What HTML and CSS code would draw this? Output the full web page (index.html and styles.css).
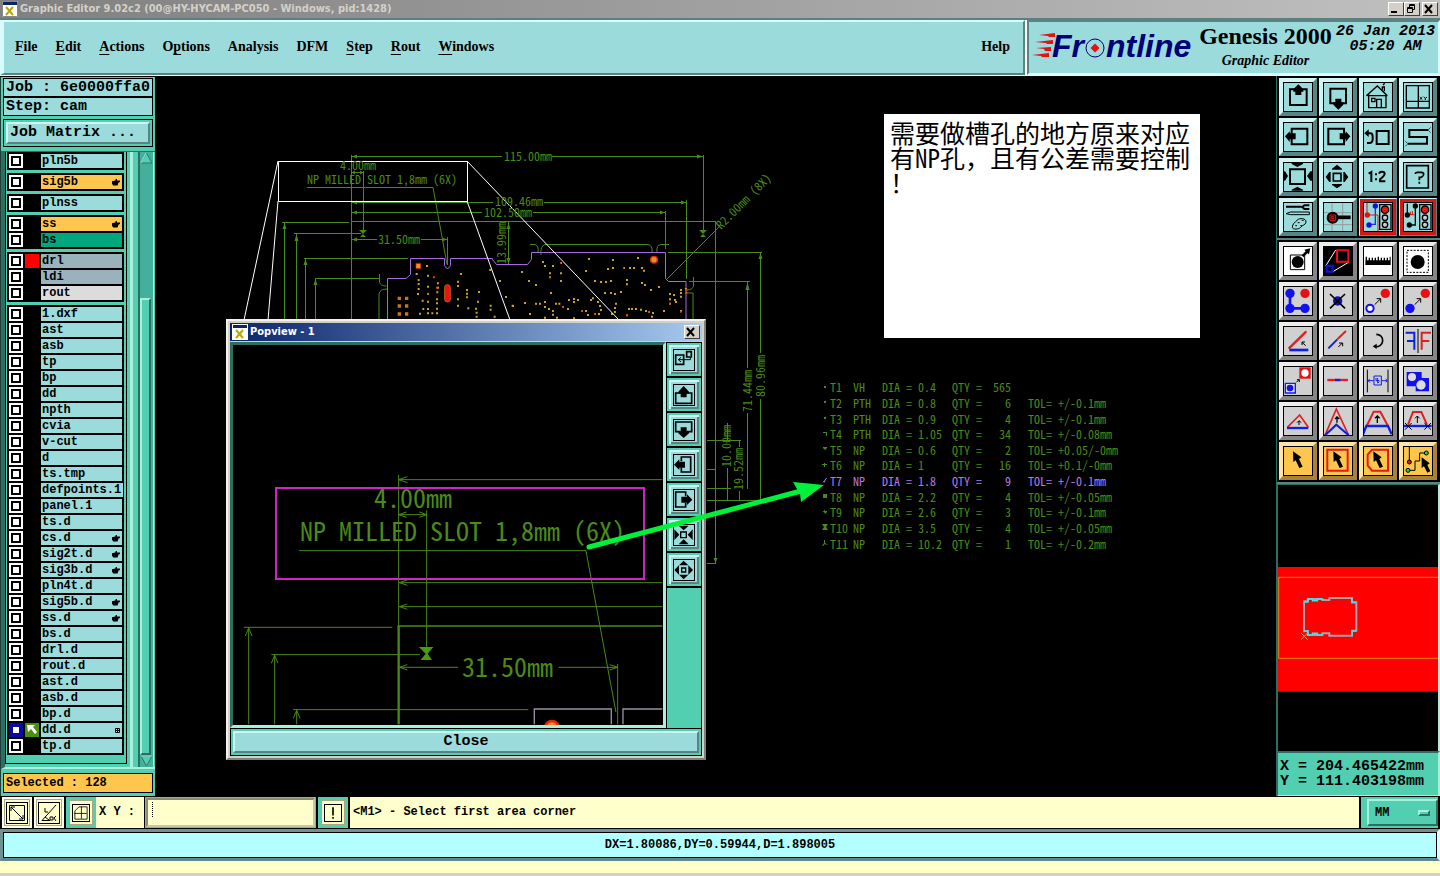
FILE: index.html
```html
<!DOCTYPE html>
<html lang="en">
<head>
<meta charset="utf-8">
<title>Graphic Editor</title>
<link rel="stylesheet" href="styles.css">
</head>
<body>
<header class="titlebar">
  <svg class="app-icon" width="16" height="16" viewBox="0 0 16 16"><path fill="#fff" d="M0 0h16v16H0z"/><path fill="#0a246a" d="M1 1h14v3H1z"/><path stroke="#b8a800" stroke-width="2" d="M4 6l7 8M11 6l-7 8"/><path fill="none" stroke="#888" d="M.5 .5h15v15H.5z"/></svg>
  <h1 class="title-text">Graphic Editor 9.02c2 (00@HY-HYCAM-PC050 - Windows, pid:1428)</h1>
  <div class="window-buttons">
    <button class="win-btn" aria-label="Minimize"><svg width="12" height="10"><path fill="#000" d="M2 7h6v2H2z"/></svg></button>
    <button class="win-btn" aria-label="Restore"><svg width="12" height="10"><path fill="none" stroke="#000" d="M4.500 3V.5h5v5H8M4 1.500h6M2.500 3.500h5v5h-5zM2 4.500h6"/></svg></button>
    <button class="win-btn spaced" aria-label="Close window"><svg width="12" height="10"><path stroke="#000" stroke-width="2" d="M2 1l7 8M9 1L2 9"/></svg></button>
  </div>
</header>

<div class="header">
  <nav class="menu">
    <a href="#"><u>F</u>ile</a><a href="#"><u>E</u>dit</a><a href="#"><u>A</u>ctions</a><a href="#">O<u>p</u>tions</a><a href="#">Analysis</a><a href="#">DFM</a><a href="#"><u>S</u>tep</a><a href="#"><u>R</u>out</a><a href="#"><u>W</u>indows</a>
    <a class="help" href="#">Help</a>
  </nav>
  <div class="brand">
    <svg class="logo" width="164" height="36" viewBox="0 0 164 36" aria-label="Frontline">
      <path fill="#e81010" d="M8 7l16-2v4H18l-1-1zM4 14l18-2v4h-6l-1-1zM5 20l15-1v4h-6l-1-2zM1 27l17-2v4h-7l-1-1z"/>
      <text class="logo-text" x="21" y="29">Fr</text>
      <text class="logo-text" x="75" y="29">ntline</text>
      <circle cx="64" cy="20" r="9" fill="none" stroke="#000078" stroke-width="1"/>
      <path fill="#e81010" d="M64 15.500l4.500 4.500-4.500 4.500-4.500-4.500z"/>
    </svg>
    <div class="product"><strong>Genesis 2000</strong><em>Graphic Editor</em></div>
    <div class="clock"><span>26 Jan 2013</span><span>05:20 AM</span></div>
  </div>
</div>

<main class="workspace">
  <aside class="sidebar">
    <div class="info">Job : 6e0000ffa0</div>
    <div class="info">Step: cam</div>
    <div class="matrix"><button>Job Matrix ...</button></div>
    <div class="layers">
      <div class="layer-list">
        <div class="group"><label class="layer"><input type="checkbox"><i></i><span>pln5b</span></label></div>
        <div class="group"><label class="layer signal"><input type="checkbox"><i></i><span>sig5b<b class="hand"></b></span></label></div>
        <div class="group"><label class="layer"><input type="checkbox"><i></i><span>plnss</span></label></div>
        <div class="group"><label class="layer signal"><input type="checkbox"><i></i><span>ss<b class="hand"></b></span></label><label class="layer mask"><input type="checkbox"><i></i><span>bs</span></label></div>
        <div class="group"><label class="layer drill"><input type="checkbox"><i class="red"></i><span>drl</span></label><label class="layer drill"><input type="checkbox"><i></i><span>ldi</span></label><label class="layer rout"><input type="checkbox"><i></i><span>rout</span></label></div>
        <div class="group">
          <label class="layer"><input type="checkbox"><i></i><span>1.dxf</span></label>
          <label class="layer"><input type="checkbox"><i></i><span>ast</span></label>
          <label class="layer"><input type="checkbox"><i></i><span>asb</span></label>
          <label class="layer"><input type="checkbox"><i></i><span>tp</span></label>
          <label class="layer"><input type="checkbox"><i></i><span>bp</span></label>
          <label class="layer"><input type="checkbox"><i></i><span>dd</span></label>
          <label class="layer"><input type="checkbox"><i></i><span>npth</span></label>
          <label class="layer"><input type="checkbox"><i></i><span>cvia</span></label>
          <label class="layer"><input type="checkbox"><i></i><span>v-cut</span></label>
          <label class="layer"><input type="checkbox"><i></i><span>d</span></label>
          <label class="layer"><input type="checkbox"><i></i><span>ts.tmp</span></label>
          <label class="layer"><input type="checkbox"><i></i><span>defpoints.1</span></label>
          <label class="layer"><input type="checkbox"><i></i><span>panel.1</span></label>
          <label class="layer"><input type="checkbox"><i></i><span>ts.d</span></label>
          <label class="layer"><input type="checkbox"><i></i><span>cs.d<b class="hand"></b></span></label>
          <label class="layer"><input type="checkbox"><i></i><span>sig2t.d<b class="hand"></b></span></label>
          <label class="layer"><input type="checkbox"><i></i><span>sig3b.d<b class="hand"></b></span></label>
          <label class="layer"><input type="checkbox"><i></i><span>pln4t.d</span></label>
          <label class="layer"><input type="checkbox"><i></i><span>sig5b.d<b class="hand"></b></span></label>
          <label class="layer"><input type="checkbox"><i></i><span>ss.d<b class="hand"></b></span></label>
          <label class="layer"><input type="checkbox"><i></i><span>bs.d</span></label>
          <label class="layer"><input type="checkbox"><i></i><span>drl.d</span></label>
          <label class="layer"><input type="checkbox"><i></i><span>rout.d</span></label>
          <label class="layer"><input type="checkbox"><i></i><span>ast.d</span></label>
          <label class="layer"><input type="checkbox"><i></i><span>asb.d</span></label>
          <label class="layer"><input type="checkbox"><i></i><span>bp.d</span></label>
          <label class="layer"><input type="checkbox" checked><i class="active"><svg width="14" height="14"><path fill="#fff" d="M2 2h8L8 4l4 5-2 2-4-5-3 3z"/></svg></i><span>dd.d<svg class="grid-mark" width="5" height="5"><path fill="none" stroke="#000" d="M.5 .5h4v4h-4zM2.500 0v5M0 2.500h5"/></svg></span></label>
          <label class="layer"><input type="checkbox"><i></i><span>tp.d</span></label>
        </div>
      </div>
      <div class="scrollbar">
        <svg width="13" height="12"><path fill="#52ceb0" stroke="#2d7668" d="M6.500 1L12 11H1z"/><path stroke="#a8f0dc" d="M6 1L1 11"/></svg>
        <div class="thumb"></div>
        <svg width="13" height="12"><path fill="#52ceb0" stroke="#2d7668" d="M1 1h11L6.500 11z"/><path stroke="#a8f0dc" d="M1 1h11"/></svg>
      </div>
    </div>
    <div class="selected">Selected : 128</div>
  </aside>

  <section class="canvas">
    <svg class="drawing">
      <g transform="translate(-155 -76)" fill="none">
        <g class="dim">
          <path d="M351.500 155v165M351 156.500h151M552 156.500h151M703.500 155v78M352 172.500h11M363.500 171v60M307 187.500h126l14 77M351 202.500h142M544 202.500h143M686.500 200v79M351 212.500h131M533 212.500h132M665.500 211v38M351 221.500h364M715.500 221v343M282 222.500h67M284.500 222v98M294 233.500h67M296.500 234v86M304 258.500h104M305.500 258v62M315 278.500h64M315.500 278v42M379.500 274v8q1 4 7 4M387 289q-7 0-8 5v26M351 239.500h26M421 239.500h26M447.500 237v28M508.500 222v42M667 279l53-53M668 252.500h94M760.500 252v101M760.500 399v102M689 281.500h61M747.500 281v87M747.500 413v76M530 244.500h5q4 1 3 8M541 255q-1-9 4-10.500h103q5 1 4 8M657 252q-1-7 4-7.500h8M693.500 277v9q-1 4-7 4M687 293h6v26M707 440.500h34M727.500 441v-18M739.500 440v7M739.500 491v10M727.500 468v33M707 500.500h55M707 563.500h9M707 488.500h24M707 469.500h8"/>
        </g>
        <path class="dim-fill" d="M352 156.500l5-2v4zM703 156.500l-6-2v4zM352 202.500l5-2v4zM686 202.500l-5-2v4zM352 212.500l5-2v4zM665 212.500l-5-2v4zM284.500 223l-2 6h4zM296.500 234l-2 7h4zM305.500 259l-2 6h4zM315.500 279l-2 6h4zM352 239.500l5-2v4zM447 239.500l-5-2v4zM508.500 223l-2 6h4zM508.500 264l-2-6h4zM760.500 253l-2 6h4zM747.500 282l-2 8h4zM715.500 563l-2-5h4zM699 230h8l-4 4 3 3h-6l3-3zM359 230h8l-4 4 3 3h-6l3-3zM352 172.500l3-2v4zM363 172.500l-3-2v4z"/>
        <path class="outline" d="M387.500 320v-41.500H406l4.500-4V258.500h34v7q3 6 6 0v-7h42v1l4 5h31l4-5v-7h134v26l3 3h17.500v39"/>
        <g transform="translate(220 140) scale(.3333)" stroke-width="6">
          <path stroke="#c9a42a" d="M618 378h6M587 402h6M621 407h6M593 420h6M651 430h6M593 432h6M593 447h6M621 440h6M651 443h6M591 462h6M621 462h6M649 457h6M605 482h6M621 485h6M648 478h6M648 490h6M607 507h6M621 507h6M648 506h6M597 521h6M621 520h6M634 520h6M648 520h6M720 402h6M711 425h6M711 438h6M738 450h6M738 461h6M738 472h6M774 456h6M771 485h6M711 478h6M711 497h6M742 505h6M765 506h6M767 518h6M767 530h6M808 390h6M837 423h6M855 471h6M875 497h6M809 497h6M809 509h6M821 530h6"/>
          <path stroke="#c87518" stroke-width="10" d="M533 475h10M555 475h10M533 498h10M555 498h10M533 522h10M555 522h10"/>
          <path stroke="#e8941c" stroke-width="14" d="M588 378h14"/><path stroke="#e02a10" stroke-width="2" d="M588 370h14v16h-14z"/>
          <rect x="674" y="434" width="17" height="52" rx="8" fill="#f01010" stroke="#b06018" stroke-width="3"/>
          <path stroke="#d84010" d="M639 412h6M621 461h4M648 443h4"/>
        </g>
        <g transform="translate(500 140) scale(.3333)" stroke-width="6">
          <path stroke="#c9a42a" d="M264 357h6M126 366h6M132 378h6M156 378h6M336 360h6M411 354h6M180 369h6M255 393h6M321 387h6M336 384h6M369 384h6M387 384h6M399 384h6M423 384h6M429 392h6M63 396h6M147 400h6M180 400h6M147 412h6M84 423h6M105 435h6M180 423h6M282 423h6M300 426h6M315 426h6M330 423h6M378 420h6M378 433h6M423 429h6M432 435h6M450 450h6M474 441h6M150 459h6M312 459h6M330 459h6M342 462h6M360 456h6M15 471h6M36 498h6M72 489h6M87 522h6M105 491h6M117 491h6M132 486h6M132 501h6M144 507h6M156 513h6M165 491h6M175 491h6M186 501h6M204 480h6M219 477h6M231 480h6M201 507h6M219 486h6M243 513h6M255 513h6M261 525h6M270 480h6M276 475h6M291 486h6M297 498h6M300 510h6M282 522h6M294 522h6M345 491h6M342 504h6M342 516h6M333 522h6M384 507h6M393 507h6M405 507h6M420 509h6M435 513h6M444 516h6M456 519h6M453 530h6M378 526h6M489 513h6M507 462h6M519 465h6M507 478h6M522 480h6M507 491h6M525 486h6M540 450h6M540 459h6M540 470h6M540 513h6M132 533h6M156 524h6M168 533h6M219 535h6M555 447h6M555 459h6"/>
          <path stroke="#d84010" d="M180 369h4M147 412h4M186 501h5M243 513h5M282 522h5M378 526h5M444 516h5M540 515h5M507 491h4M555 450h7M555 460h7M369 384h4"/>
          <circle cx="462" cy="359" r="10" fill="#d89a1c" stroke="#e02a10" stroke-width="4"/>
        </g>
        <path class="select-line" d="M278.500 161.500h189v40h-189zM278 161L244 320M278 201l-10 119M467 161l152 159M467 201l43 119"/>
        <g class="cad">
          <text x="504" y="161">115.00mm</text><text x="340" y="170">4.00mm</text><text x="307" y="184">NP MILLED SLOT 1,8mm (6X)</text>
          <text x="495" y="206">109.46mm</text><text x="484" y="217">102.50mm</text><text x="378" y="244">31.50mm</text>
          <text transform="translate(506 264) rotate(-90)">13.99mm</text>
          <text transform="translate(721 230) rotate(-45)">R2.00mm (8X)</text>
          <text transform="translate(765 397) rotate(-90)">80.96mm</text>
          <text transform="translate(752 412) rotate(-90)">71.44mm</text>
          <text transform="translate(731 467) rotate(-90)">10.00mm</text>
          <text transform="translate(743 490) rotate(-90)">19.52mm</text>
        </g>
      </g>
    </svg>

    <div class="note" lang="zh">需要做槽孔的地方原来对应<br>有NP孔，且有公差需要控制<br>！</div>

    <table class="drills">
      <colgroup><col class="c-mark"><col class="c-tool"><col class="c-type"><col class="c-key"><col class="c-val"><col class="c-key"><col class="c-qty"><col class="c-tol"></colgroup>
      <tr><td><svg width="6" height="6"><path d="M2 2h2v2H2z"/></svg></td><td>T1</td><td>VH</td><td>DIA =</td><td>0.4</td><td>QTY =</td><td class="num">565</td><td></td></tr>
      <tr><td><svg width="6" height="6"><path d="M2 2h2v2H2z"/></svg></td><td>T2</td><td>PTH</td><td>DIA =</td><td>0.8</td><td>QTY =</td><td class="num">6</td><td>TOL= +/-0.1mm</td></tr>
      <tr><td><svg width="6" height="6"><path d="M2 2h2v2H2z"/></svg></td><td>T3</td><td>PTH</td><td>DIA =</td><td>0.9</td><td>QTY =</td><td class="num">4</td><td>TOL= +/-0.1mm</td></tr>
      <tr><td><svg width="6" height="6"><path d="M1 1h4v4H4V2H1z"/></svg></td><td>T4</td><td>PTH</td><td>DIA =</td><td>1.05</td><td>QTY =</td><td class="num">34</td><td>TOL= +/-0.08mm</td></tr>
      <tr><td><svg width="6" height="6"><path d="M1 1h4v1L3 4 1 2z"/></svg></td><td>T5</td><td>NP</td><td>DIA =</td><td>0.6</td><td>QTY =</td><td class="num">2</td><td>TOL= +0.05/-0mm</td></tr>
      <tr><td><svg width="6" height="6"><path d="M2 1h1v1h2v1H3v2H2V3H0V2h2z"/></svg></td><td>T6</td><td>NP</td><td>DIA =</td><td>1</td><td>QTY =</td><td class="num">16</td><td>TOL= +0.1/-0mm</td></tr>
      <tr class="picked"><td><svg width="6" height="6"><path d="M4 0h1L2 5 1 3h1z"/></svg></td><td>T7</td><td>NP</td><td>DIA =</td><td>1.8</td><td>QTY =</td><td class="num">9</td><td>TOL= +/-0.1mm</td></tr>
      <tr><td><svg width="6" height="6"><path d="M1 1h4v4H1z"/></svg></td><td>T8</td><td>NP</td><td>DIA =</td><td>2.2</td><td>QTY =</td><td class="num">4</td><td>TOL= +/-0.05mm</td></tr>
      <tr><td><svg width="6" height="6"><path d="M0 2h2l1-2v2h2v1L3 5 2 3z"/></svg></td><td>T9</td><td>NP</td><td>DIA =</td><td>2.6</td><td>QTY =</td><td class="num">3</td><td>TOL= +/-0.1mm</td></tr>
      <tr><td><svg width="6" height="6"><path d="M0 0h6L4 3l2 3H0l2-3z"/></svg></td><td>T10</td><td>NP</td><td>DIA =</td><td>3.5</td><td>QTY =</td><td class="num">4</td><td>TOL= +/-0.05mm</td></tr>
      <tr><td><svg width="6" height="6"><path d="M2 0h1v3l3 2H5L3 4 1 6H0l2-3z"/></svg></td><td>T11</td><td>NP</td><td>DIA =</td><td>10.2</td><td>QTY =</td><td class="num">1</td><td>TOL= +/-0.2mm</td></tr>
    </table>

    <section class="popview">
      <header class="pop-title">
        <svg class="app-icon" width="16" height="16" viewBox="0 0 16 16"><path fill="#fff" d="M0 0h16v16H0z"/><path fill="#0a246a" d="M1 1h14v3H1z"/><path stroke="#b8a800" stroke-width="2" d="M4 6l7 8M11 6l-7 8"/></svg>
        <h2>Popview - 1</h2>
        <button class="win-btn" aria-label="Close popview"><svg width="12" height="10"><path stroke="#000" stroke-width="2" d="M2 1l7 8M9 1L2 9"/></svg></button>
      </header>
      <div class="pop-body">
        <svg class="pop-view">
          <g transform="scale(.3333) translate(-27 -87)" fill="none">
            <g stroke="#4a8a14" stroke-width="3">
              <path d="M524 477v455M524 491h791M550 482l-26 9 26 9M526 596h82M548 588l-24 8 24 8M586 588l22 8-22 8M608 583v412M225 704h861l90 485M526 800h789M550 792l-24 8 24 8M526 872h789M550 864l-24 8 24 8M60 934h445M74 934v291M64 960l10-24 10 24M142 1016h446M152 1016v209M142 1042l10-24 10 24M207 1181h706M218 1181v44M208 1207l10-24 10 24M526 1054h176M550 1046l-24 8 24 8M1004 1054h177M1157 1046l24 8-24 8M1181 1044v181"/>
              <path stroke-width="5" d="M521 930h794"/><path stroke-width="7" d="M524 930v295"/>
              <path fill="#4a9a10" stroke="none" d="M585 993h43l-17 20 13 19h-34l15-19z"/>
            </g>
            <path stroke="#9a8ea6" stroke-width="4" d="M931 1225v-46h231v46M1197 1225v-46h118"/>
            <circle cx="984" cy="1235" r="20" fill="#f08a20" stroke="#e02810" stroke-width="8"/>
            <path stroke="#cf25c4" stroke-width="6" d="M156 516h1104v273H156z"/>
          </g>
          <g class="cad-large"><text x="141" y="163">4.00mm</text><text x="67" y="196">NP MILLED SLOT 1,8mm (6X)</text><text x="229" y="332">31.50mm</text></g>
        </svg>
        <div class="pop-tools">
          <button aria-label="New view"><svg viewBox="1350 101 66 66"><path d="M1358 119h24v28h-24zM1391 109h14v16h-14z" stroke-width="5"/><path d="M1402 125v8h-35M1374 126l-8 7 8 7" stroke-width="3"/></svg></button>
          <button aria-label="Pan up"><svg viewBox="1350 206 66 66"><path d="M1372 233h-14v31h48v-31h-14" stroke-width="5"/><path class="f" d="M1382 212l16 17v6h-7v11h-18v-11h-7v-6z"/></svg></button>
          <button aria-label="Pan down"><svg viewBox="1350 311 66 66"><path d="M1372 349h-14v-29h48v29h-14" stroke-width="5"/><path class="f" d="M1382 368l16-14v-6h-7v-12h-18v12h-7v6z"/></svg></button>
          <button aria-label="Pan left"><svg viewBox="1350 416 66 66"><path d="M1375 438v-13h28v45h-28v-13" stroke-width="5"/><path class="f" d="M1353 448l16-16v7h17v18h-17v7z"/></svg></button>
          <button aria-label="Pan right"><svg viewBox="1350 521 66 66"><path d="M1388 543v-13h-30v45h30v-13" stroke-width="5"/><path class="f" d="M1408 553l-16-16v7h-17v18h17v7z"/></svg></button>
          <button aria-label="Zoom in"><svg viewBox="1350 626 66 66"><path d="M1373 650h17v17h-17z" stroke-width="4"/><path class="f" d="M1382 645l-15-14h30zM1382 672l-15 15h30zM1369 658l-15-16v32zM1394 658l15-16v32z"/></svg></button>
          <button aria-label="Zoom out"><svg viewBox="1350 731 66 66"><path d="M1376 758h12v12h-12z" stroke-width="4"/><path class="f" d="M1382 736l14 14h-28zM1382 792l-14-14h28zM1354 764l14-14v28zM1410 764l-14-14v28z"/></svg></button>
        </div>
      </div>
      <div class="pop-foot"><button>Close</button></div>
    </section>

    <svg class="pointer"><g transform="translate(-155 -76)"><path stroke="#00f03c" stroke-width="5" stroke-linecap="round" d="M589 547l212-56"/><path fill="#00f03c" d="M824 485l-23 17-1-8-7-12z"/></g></svg>
  </section>

  <aside class="right">
    <div class="tools">
      <button aria-label="Pan up"><svg viewBox="22 19 90 90"><path d="M43 41h50v47H43z" stroke-width="6"/><path class="f" d="M68 26l15 15v7h-6v10H59V48h-6v-7z"/></svg></button>
      <button aria-label="Pan down"><svg viewBox="142 19 90 90"><path d="M164 39h47v44h-47z" stroke-width="6"/><path class="f" d="M188 102l15-15v-7h-6V69h-18v11h-6v7z"/></svg></button>
      <button aria-label="Home"><svg viewBox="262 19 90 90"><path stroke-width="4" d="M272 60l33-29 30 29M279 56v40h52V56M275 60h60M303 96V71h14v25M288 68h10v10h-10zM320 42v-8h6v13M322 28l5-5"/></svg></button>
      <button aria-label="Views"><svg viewBox="382 19 90 90"><path stroke-width="4" d="M392 30h69v67h-69zM428 30v67M392 77h69"/><path stroke-width="3" d="M432 64l8 8M440 64l-8 8M444 64l5 4v5M454 64l-5 4"/></svg></button>
      <button aria-label="Pan left"><svg viewBox="22 139 90 90"><path d="M48 159h47v47H48z" stroke-width="6"/><path class="f" d="M28 182l14-15v6h18v18H42v8z"/></svg></button>
      <button aria-label="Pan right"><svg viewBox="142 139 90 90"><path d="M158 159h47v47h-47z" stroke-width="6"/><path class="f" d="M224 182l-14-15v6h-18v18h18v8z"/></svg></button>
      <button aria-label="Previous view"><svg viewBox="262 139 90 90"><path d="M303 166h36v39h-36z" stroke-width="6"/><path stroke-width="6" d="M274 173h10q7 0 7 10v8q0 11-10 11h-7"/><path class="f" d="M266 173l13-12v23z"/></svg></button>
      <button aria-label="Serpentine"><svg viewBox="382 139 90 90"><path stroke-width="6" d="M457 163h-56v21h53v20h-57"/><path stroke-width="2" d="M457 163l8-8M457 163l8 8M397 204l-8-7M397 204l-8 8"/></svg></button>
      <button aria-label="Zoom in"><svg viewBox="22 259 90 90"><path d="M43 281h45v44H43z" stroke-width="6"/><path class="f" d="M65 274l-17-9v-3h34v3zM65 333l17 9v3H48v-3zM37 301l-9 14h-5v-28h5zM94 301l10 14h5v-28h-5z"/></svg></button>
      <button aria-label="Zoom out"><svg viewBox="142 259 90 90"><path d="M173 293h23v23h-23z" stroke-width="5"/><path class="f" d="M184 267l15 12v3h-30v-3zM184 338l15-10v-3h-30v3zM150 304l11-15h4v30h-4zM218 304l-11-15h-4v30h4z"/></svg></button>
      <button aria-label="Zoom 1:2"><svg viewBox="262 259 90 90"><path stroke-width="6" d="M279 294l8-5v30M298 296h6M298 311h6M311 294q0-6 8-6t8 6-14 17v6h16"/></svg></button>
      <button aria-label="Query"><svg viewBox="382 259 90 90"><path stroke-width="5" d="M393 270h65v67h-65zM419 295q0-5 6-5h12q7 0 7 6t-7 9h-6v9M431 318v6"/></svg></button>
      <button aria-label="Setup"><svg viewBox="22 379 90 90"><path stroke-width="6" d="M31 393h46M101 389H86l-6 5 6 6h15"/><path stroke-width="3" d="M31 414l14-5h56v8H45zM50 455c0-10 8-15 14-21 8-9 28-6 27 5-1 10-11 8-16 16-5 6-24 8-25 0zM59 450h5M66 441h6M78 434h6M74 450h5"/></svg></button>
      <button aria-label="Origin"><svg viewBox="142 379 90 90"><path stroke="#999" stroke-width="3" d="M169 383v83M201 383v83M145 411h83M145 447h83"/><path stroke-width="11" d="M185 425h40"/><circle class="f" cx="171" cy="426" r="18"/><path stroke="#d81818" stroke-width="3" d="M163 418h17v16h-17zM168 423h7v6h-7z"/></svg></button>
      <button class="alert" aria-label="Net check"><svg viewBox="262 379 90 90"><path stroke="#2030e0" stroke-width="4" d="M299 392v54h-20"/><path stroke="#d01818" stroke-width="3" d="M274 380v38h33v50"/><circle cx="299" cy="391" r="8" fill="#1010e8"/><circle cx="275" cy="418" r="8" fill="#e81010"/><circle cx="280" cy="448" r="8" fill="#1010e8"/><path d="M312 387h34v74h-34z" stroke-width="4"/><circle cx="328" cy="402" r="11" fill="#f01010" stroke="#000" stroke-width="4"/><circle cx="328" cy="426" r="8" fill="#ccd" stroke="#000" stroke-width="4"/><circle cx="328" cy="447" r="8" fill="#ccd" stroke="#000" stroke-width="4"/></svg></button>
      <button class="alert" aria-label="Rule check"><svg viewBox="382 379 90 90"><path stroke-width="4" d="M395 384v34M419 392v56h-18"/><path stroke="#e01010" stroke-width="3" d="M400 417h16M404 408v9M410 406v11"/><circle class="f" cx="419" cy="391" r="8"/><circle class="f" cx="395" cy="418" r="8"/><circle class="f" cx="401" cy="448" r="8"/><path d="M432 387h34v74h-34z" stroke-width="4"/><circle cx="448" cy="402" r="11" fill="#f01010" stroke="#000" stroke-width="4"/><circle cx="448" cy="426" r="8" fill="#ccd" stroke="#000" stroke-width="4"/><circle cx="448" cy="447" r="8" fill="#ccd" stroke="#000" stroke-width="4"/></svg></button>
    </div>
    <div class="tools gray">
      <button class="lit" aria-label="Select feature"><svg viewBox="22 510 90 90"><path d="M44 537h43v44H44z" stroke-width="3"/><circle class="f" cx="66" cy="558" r="18"/><path class="f" d="M78 538l12-12-4-5 18-4-4 18-5-3-12 12z"/></svg></button>
      <button class="lit" aria-label="Resize copy"><svg viewBox="142 510 90 90"><path class="f" d="M142 510h90v90h-90z"/><path stroke="#fff" stroke-width="3" d="M180 522l-30 48M220 558l-50 30"/><path stroke="#e81010" stroke-width="6" d="M184 523h34v34h-34z"/><path stroke="#1010f0" stroke-width="6" d="M153 569h18v18h-18z"/></svg></button>
      <button class="lit" aria-label="Measure"><svg viewBox="262 510 90 90"><path class="f" d="M270 542h4v11h5v-8h4v8h5v-8h4v8h5v-8h4v8h5v-11h4v11h5v-8h4v8h5v-8h4v8h5v-8h4v8h5v-11h3v25h-76z"/></svg></button>
      <button class="lit" aria-label="Area select"><svg viewBox="382 510 90 90"><path stroke-width="3" stroke-dasharray="6 4" d="M394 523h64v66h-64z"/><circle class="f" cx="426" cy="558" r="21"/></svg></button>

      <button aria-label="Connect"><svg viewBox="22 19 90 90"><path stroke="#1010f0" stroke-width="8" d="M43 41v45h45"/><circle fill="#1010f0" cx="43" cy="41" r="14"/><circle fill="#1010f0" cx="43" cy="86" r="14"/><circle fill="#1010f0" cx="88" cy="86" r="14"/><circle cx="88" cy="41" r="14" fill="#e81010"/></svg></button>
      <button aria-label="Delete"><svg viewBox="142 19 90 90"><circle cx="186" cy="64" r="14" fill="#1010c0"/><path stroke-width="5" d="M163 43l45 43M208 43l-45 43"/></svg></button>
      <button aria-label="Move open"><svg viewBox="262 19 90 90"><circle cx="283" cy="86" r="11" fill="#fff" stroke="#1010f0" stroke-width="6"/><circle cx="329" cy="41" r="14" fill="#e81010"/><path stroke-width="3" d="M297 75l17-17M303 57h12v12"/></svg></button>
      <button aria-label="Copy"><svg viewBox="382 19 90 90"><circle cx="403" cy="86" r="14" fill="#1010f0"/><circle cx="449" cy="41" r="14" fill="#e81010"/><path stroke-width="3" d="M417 75l17-17M423 57h12v12"/></svg></button>

      <button aria-label="Rotate line"><svg viewBox="22 139 90 90"><path stroke="#e02020" stroke-width="7" d="M39 207l53-52"/><path stroke="#1020e0" stroke-width="8" d="M41 211h57"/><path stroke-width="3" d="M90 198l-11-10M79 196v-9h9"/></svg></button>
      <button aria-label="Extend line"><svg viewBox="142 139 90 90"><path stroke="#1020e0" stroke-width="6" d="M158 206l27-27"/><path stroke="#e02020" stroke-width="6" d="M185 179l26-25"/><path stroke-width="3" d="M188 202l12-12M190 190h11v10"/></svg></button>
      <button aria-label="Rotate"><svg viewBox="262 139 90 90"><path stroke-width="5" d="M302 164c12 0 20 9 19 20-1 13-12 18-24 17"/><path class="f" d="M291 200l12-8v16z"/></svg></button>
      <button aria-label="Mirror"><svg viewBox="382 139 90 90"><path stroke="#1020e0" stroke-width="6" d="M390 159h26v51M394 184h22"/><path stroke="#e02020" stroke-width="6" d="M466 159h-28v51M461 184h-23"/><path stroke-width="3" d="M427 148v72"/></svg></button>

      <button aria-label="Substitute"><svg viewBox="22 259 90 90"><path fill="#ddd" stroke="#1020e0" stroke-width="4" d="M29 311h30v29H29z"/><circle cx="43" cy="325" r="10" fill="#1010f0"/><path fill="#e81010" d="M71 263h34v34H71z"/><circle cx="88" cy="280" r="11" fill="#fff"/><path stroke-width="3" d="M62 308l8-8M64 300h7v7"/></svg></button>
      <button aria-label="Merge line"><svg viewBox="142 259 90 90"><path stroke="#e02020" stroke-width="7" d="M155 301h62"/><path stroke="#1020e0" stroke-width="7" d="M178 301h16"/></svg></button>
      <button aria-label="Spacing"><svg viewBox="262 259 90 90"><path stroke-width="3" d="M275 270v68M337 270v68"/><path stroke="#1020e0" stroke-width="3" d="M277 303h17M282 298l-5 5 5 5M317 303h18M330 298l5 5-5 5M295 289h22v27h-22zM301 295v8h10M306 295v15l5-4"/></svg></button>
      <button aria-label="Subtract"><svg viewBox="382 259 90 90"><path fill="#1010f0" d="M393 277h45v18h22v40h-40v-15h-27z"/><circle cx="409" cy="292" r="12" fill="#ddd"/><circle cx="436" cy="316" r="14" fill="#ddd"/></svg></button>

      <button aria-label="Triangle"><svg viewBox="22 379 90 90"><path stroke="#e02020" stroke-width="5" d="M35 443l37-37 26 37"/><path stroke="#1020e0" stroke-width="7" d="M34 445h64"/><path stroke-width="3" d="M70 436v-12M64 429l6-6 7 6"/></svg></button>
      <button aria-label="Peak"><svg viewBox="142 379 90 90"><path stroke="#e02020" stroke-width="5" d="M148 467l34-79 37 79"/><path stroke="#1020e0" stroke-width="6" d="M148 467l34-32 37 32"/><path stroke-width="4" d="M184 429v-17M178 418l6-6 7 6"/></svg></button>
      <button aria-label="Trapezoid"><svg viewBox="262 379 90 90"><path stroke="#e02020" stroke-width="6" d="M273 439l21-43h20l23 43"/><path stroke="#1020e0" stroke-width="7" d="M262 464l10-25h65l11 25"/><path stroke-width="4" d="M305 430v-20M298 416l7-7 7 7"/></svg></button>
      <button aria-label="Trim"><svg viewBox="382 379 90 90"><path stroke="#e02020" stroke-width="6" d="M397 435l15-38h25l17 38"/><path stroke="#1020e0" stroke-width="7" d="M384 439h84"/><path stroke-width="3" d="M425 430v-20M418 416l7-7 7 7M388 430l20 20M408 430l-20 20M446 430l20 20M466 430l-20 20"/></svg></button>

      <button class="orange" aria-label="Pick"><svg viewBox="22 499 90 90"><path class="f" d="M52 515l25 18-7 5 11 23-10 4-11-23-7 5z"/></svg></button>
      <button class="orange" aria-label="Pick in rectangle"><svg viewBox="142 499 90 90"><path stroke="#e81818" stroke-width="6" d="M155 510h61v63h-61z"/><path class="f" d="M173 515l25 18-7 5 11 23-10 4-11-23-7 5z"/></svg></button>
      <button class="orange" aria-label="Pick in polygon"><svg viewBox="262 499 90 90"><path stroke="#e81818" stroke-width="6" d="M289 510h48v63h-48l-13-16v-32z"/><path class="f" d="M293 515l25 18-7 5 11 23-10 4-11-23-7 5z"/></svg></button>
      <button class="orange" aria-label="Pick net"><svg viewBox="382 499 90 90"><path stroke-width="3" d="M401 502v45M397 572h21v-28h14v-24h20"/><circle cx="401" cy="547" r="6" fill="#d82010" stroke="#000" stroke-width="3"/><circle cx="397" cy="572" r="6" fill="#20d838" stroke="#000" stroke-width="3"/><circle cx="452" cy="520" r="6" fill="#20d838" stroke="#000" stroke-width="3"/><path class="f" d="M438 533l24 18-7 5 9 19-9 4-10-19-7 5z"/></svg></button>
    </div>
    <svg class="overview">
      <g transform="scale(.3333) translate(-24 -15)">
        <path fill="#f00" d="M24 261h9999v374H24z"/>
        <path fill="none" stroke="#d88a10" stroke-width="3" d="M9999 292H26v243h9973"/>
        <path fill="none" stroke="#a5a5b0" stroke-width="6" d="M102 457v-93h12v-7h43v3h21v-6h68v13h13v85h-13v15h-68v-7h-21v5h-43v-12h-12z"/>
        <path fill="none" stroke="#20f0f0" stroke-width="5" d="M102 366h11v-9h15v5h14v-5h17M102 453h11v12h15v-5h14v5h17M246 357v10h11M259 453h-13v12"/>
        <path stroke="#d8a060" stroke-width="3" d="M93 459l20 20M113 459l-20 20"/>
      </g>
    </svg>
    <output class="coords">X = 204.465422mm<br>Y = 111.403198mm</output>
  </aside>
</main>

<footer>
  <div class="command">
    <button class="cmd" aria-label="Diagonal"><svg width="22" height="22" viewBox="0 0 22 22"><path d="M3.500 3.500h15v15h-15zM5 5l12 12M5 9V5h4M17 13v4h-4"/></svg></button>
    <button class="cmd" aria-label="Angle"><svg width="22" height="22" viewBox="0 0 22 22"><path d="M18 3L4 18.500h8M7 6v4h3M7 15l4 3M12 15h3v3h-3zM18 14l-2 2 2 3"/></svg></button>
    <button class="cmd green" aria-label="Snap"><svg width="22" height="22" viewBox="0 0 22 22"><path d="M3.500 8.500l5-5h10v15h-15zM3 11.500h15M11.500 3v15"/></svg></button>
    <label for="xy">X Y :</label>
    <input id="xy" type="text">
    <button class="cmd green" aria-label="Apply"><svg width="22" height="22" viewBox="0 0 22 22"><path stroke-width="2" d="M11 4v10M11 16v2"/></svg></button>
    <p class="message">&lt;M1&gt; - Select first area corner</p>
    <div class="units"><button>MM<span></span></button></div>
  </div>
  <div class="status"><output>DX=1.80086,DY=0.59944,D=1.898005</output></div>
</footer>
</body>
</html>
```
FILE: styles.css
```css
:root {
  --teal: #9bdbdb;
  --teal-light: #cff6f4;
  --teal-dark: #5a8484;
  --green: #52ceb0;
  --green-light: #a8f0dc;
  --green-dark: #2d6e62;
  --cream: #ffffcc;
  --orange: #ffc64e;
  --cad: #4a8a18;
  --mono: "Liberation Mono", monospace;
  --cad-font: "Noto Sans Mono CJK SC", "Liberation Mono", monospace;
}
* { box-sizing: border-box; }
body {
  margin: 0;
  height: 100vh;
  display: flex;
  flex-direction: column;
  overflow: hidden;
  background: #000;
  color: #000;
  font: bold 12px/14px var(--mono);
}
button, input { font: inherit; color: inherit; margin: 0; padding: 0; border-radius: 0; }
svg { display: block; }

/* window title */
.titlebar {
  height: 18px;
  display: flex;
  align-items: center;
  padding: 0 2px;
  gap: 2px;
  background: linear-gradient(90deg, #808080, #c0c0c0);
}
.title-text, .pop-title h2 {
  margin: 0;
  flex: 1;
  font: bold 11px/16px "DejaVu Sans Condensed", "DejaVu Sans", sans-serif;
  color: #d4d0c8;
  white-space: nowrap;
}
.window-buttons { display: flex; }
.win-btn {
  width: 16px;
  height: 14px;
  background: #d4d0c8;
  border: 1px solid;
  border-color: #fff #404040 #404040 #fff;
}
.spaced { margin-left: 2px; }

/* menu and brand */
.header { display: flex; height: 58px; background: #fff; border-top: 2px solid #5f7f7f; border-bottom: 1px solid #dff; gap: 2px; }
.menu {
  flex: 1;
  display: flex;
  align-items: center;
  gap: 18px;
  padding: 0 13px 2px 11px;
  background: var(--teal);
  border: 2px solid;
  border-color: #d8fbfb var(--teal-dark) var(--teal-dark) #d8fbfb;
  border-left-width: 4px;
  font: bold 14px/18px "Liberation Serif", serif;
}
.menu a { color: inherit; text-decoration: none; }
.menu u { text-underline-offset: 3px; text-decoration-skip-ink: none; }
.menu .help { margin-left: auto; }
.brand {
  width: 413px;
  display: flex;
  background: var(--teal);
  border: 2px solid;
  border-color: var(--teal-dark) #d8fbfb #d8fbfb var(--teal-dark);
  padding: 0 3px 0 2px;
}
.logo { margin-top: 6px; flex: none; }
.logo-text { font: italic bold 32px "Liberation Sans", sans-serif; fill: #000078; }
.product { display: flex; flex-direction: column; align-items: center; flex: 1; font-family: "Liberation Serif", serif; white-space: nowrap; }
.product strong { font-size: 24px; line-height: 28px; }
.product em { font-size: 14px; line-height: 22px; }
.clock { display: flex; flex-direction: column; align-items: center; padding-top: 2px; font: italic bold 15px/15px var(--mono); }

/* layer panel */
.workspace { flex: 1; min-height: 0; display: flex; }
.sidebar {
  width: 155px;
  margin-top: 1px;
  padding: 1px 2px 3px;
  display: flex;
  flex-direction: column;
  background: var(--green);
  border-left: 1px solid #1c4038;
}
.info { border: 1px solid #000; background: var(--teal); font-size: 15px; line-height: 17px; padding-left: 2px; white-space: nowrap; }
.matrix { margin: 3px 0 4px; border: 1px solid #000; padding: 2px; }
.matrix button {
  display: block;
  width: 100%;
  text-align: left;
  padding-left: 2px;
  font: bold 15px/18px var(--mono);
  background: var(--teal);
  border: 2px solid;
  border-color: var(--teal-light) var(--teal-dark) var(--teal-dark) var(--teal-light);
}
.layers {
  flex: 1;
  min-height: 0;
  margin: 0 -2px;
  display: flex;
  justify-content: space-between;
  border-left: 4px solid var(--green-dark);
  border-top: 1px solid var(--green-dark);
  border-bottom: 2px solid var(--green-light);
}
.layer-list {
  width: 122px;
  border: solid #000;
  border-width: 0 1px 1px;
  padding: 0 2px 0 1px;
  margin-bottom: 3px;
  display: flex;
  flex-direction: column;
  gap: 3px;
  overflow: hidden;
}
.group { background: #000; padding: 2px 2px 0; }
.layer { display: grid; grid-template-columns: 14px 14px 1fr; gap: 2px; height: 14px; margin-bottom: 2px; }
.layer input {
  appearance: none;
  width: 14px;
  height: 14px;
  background: #fff;
  border: 2px solid #fff;
  box-shadow: inset 0 0 0 2px #000;
}
.layer input:checked { border-color: #0a0aa0; box-shadow: inset 0 0 0 2px #0a0aa0; }
.layer span { display: flex; justify-content: space-between; align-items: center; background: var(--teal); padding: 0 2px 0 1px; line-height: 14px; }
.signal span { background: var(--orange); }
.mask span { background: #00a67c; }
.drill span { background: #9ab2bc; }
.rout span { background: #dcdcdc; }
.red { background: #f00; }
.active { background: #4a9010; }
.hand { width: 8px; height: 7px; background: #000; clip-path: polygon(0 40%, 40% 28%, 50% 0, 62% 0, 62% 28%, 100% 28%, 100% 50%, 80% 60%, 70% 100%, 15% 100%, 0 75%); }
.scrollbar {
  width: 16px;
  margin-right: 1px;
  display: flex;
  flex-direction: column;
  background: #44b09c;
  border-left: 2px solid var(--green-dark);
  border-right: 1px solid var(--green-light);
  box-shadow: -5px 0 0 var(--green), -8px 0 0 var(--green-light);
}
.thumb { flex: 1; margin-top: 134px; margin-right: 2px; background: var(--green); border: solid; border-width: 2px; border-color: var(--green-light) var(--green-dark) var(--green-dark) var(--green-light); }
.selected { margin-top: 4px; border: 1px solid #000; background: var(--orange); line-height: 18px; padding-left: 2px; }

/* drawing area */
.canvas { flex: 1; min-width: 0; position: relative; overflow: hidden; background: #000; }
.drawing, .pointer { position: absolute; left: 0; top: 0; width: 100%; height: 100%; }
.pointer { z-index: 3; pointer-events: none; }
.dim path { stroke: var(--cad); }
.dim-fill { fill: var(--cad); }
.outline { stroke: #a56ae0; stroke-width: 1; }
.select-line { stroke: #fff; }
.cad, .cad-large { fill: var(--cad); font: 300 12px var(--cad-font); }
.cad text, .cad-large text { white-space: pre; }
.cad-large { font-size: 26px; }
.note {
  position: absolute;
  left: 729px;
  top: 38px;
  width: 316px;
  height: 224px;
  padding: 6px;
  background: #fff;
  font: 500 25px/25px "Noto Sans Mono CJK SC", "Noto Sans CJK SC", sans-serif;
  white-space: nowrap;
}
.drills {
  position: absolute;
  left: 667px;
  top: 303px;
  width: 300px;
  height: 172px;
  table-layout: fixed;
  border-collapse: collapse;
  color: var(--cad);
  fill: currentColor;
  font: 300 12px/15px var(--cad-font);
  white-space: nowrap;
}
.drills td { padding: 0; }
.drills .num { text-align: right; }
.drills td:last-child { padding-left: 17px; }
.c-mark { width: 8px; }
.c-tool { width: 23px; }
.c-type { width: 29px; }
.c-key { width: 36px; }
.c-val { width: 34px; }
.c-qty { width: 23px; }
.picked { color: #b07af0; }

/* popview window */
.popview {
  position: absolute;
  left: 71px;
  top: 243px;
  z-index: 2;
  width: 480px;
  padding: 2px;
  background: #d4d0c8;
  border: 2px solid;
  border-color: #f4f2ee #808080 #808080 #f4f2ee;
}
.pop-title { height: 18px; display: flex; align-items: center; gap: 2px; padding: 0 2px; background: linear-gradient(90deg, #0a246a, #a6caf0); margin-bottom: 1px; }
.pop-title h2 { color: #fff; }
.pop-body { display: flex; background: var(--green); height: 386px; }
.pop-view { flex: 1; min-width: 0; height: 386px; background: #000; border: solid; border-width: 3px; border-color: var(--green-dark) var(--green-light) var(--green-light) var(--green-dark); }
.pop-tools { width: 36px; padding: 1px 1px 0; display: flex; flex-direction: column; gap: 2px; background: #000; }
.pop-tools::after { content: ""; flex: 1; background: var(--green); }
.pop-tools button {
  height: 33px;
  background: var(--teal);
  border: 2px solid var(--green);
  box-shadow: inset 2px 2px 0 var(--teal-light), inset -2px -2px 0 var(--teal-dark);
}
.pop-tools svg { width: 22px; height: 22px; margin: auto; outline: 1px solid #000; outline-offset: -1px; fill: none; stroke: #000; }
.pop-foot { border: 1px solid #000; background: var(--green); padding: 2px; }
.pop-foot button { display: block; width: 100%; height: 22px; background: var(--teal); border: 2px solid; border-color: var(--teal-light) var(--teal-dark) var(--teal-dark) var(--teal-light); font: bold 15px/18px var(--mono); }

/* right tool palette */
.right { width: 164px; display: flex; flex-direction: column; background: #000; border-left: 1px solid var(--green-dark); }
.tools {
  display: grid;
  grid-template-columns: repeat(4, 38px);
  gap: 2px;
  padding: 2px;
  border-bottom: 2px solid var(--teal-dark);
}
.tools button {
  width: 38px;
  height: 38px;
  background: var(--teal);
  border: 4px solid;
  border-color: var(--teal-light) var(--teal-dark) var(--teal-dark) var(--teal-light);
}
.tools svg { width: 30px; height: 30px; fill: none; stroke: #000; outline: 1px solid #000; outline-offset: -1px; }
.tools .f, .pop-tools .f { fill: #000; stroke: none; }
.tools [fill]:not([stroke]) { stroke: none; }
.gray button { background: #d0d0d0; border-color: #ececec #868686 #868686 #ececec; }
.gray .lit { background: #fff; }
.gray .orange { background: var(--orange); border-color: #ffe4a8 #a8823a #a8823a #ffe4a8; }
.tools .alert svg { box-shadow: 0 0 0 3px #d41818; }
.overview { flex: 1; min-height: 0; width: 100%; background: #000; border: solid var(--green-dark); border-width: 1px 0 0 1px; border-right: 2px solid #b8e8d8; }
.coords { display: block; height: 45px; padding: 6px 2px; background: var(--green); border: solid; border-width: 2px 2px 1px 1px; border-color: var(--green-dark) var(--green-light) var(--green-light) var(--green-dark); font: bold 15px/15px var(--mono); white-space: nowrap; }

/* command line and status */
.command { height: 33px; display: flex; align-items: stretch; gap: 2px; background: #000; padding: 1px 2px; line-height: 30px; }
.cmd { width: 30px; background: var(--cream); border: 2px solid #fffff0; outline: 1px solid #a8a880; outline-offset: -3px; }
.cmd.green { border: 3px solid var(--green); outline-offset: -4px; }
.cmd svg { margin: auto; fill: none; stroke: #000; outline: 1px solid #000; outline-offset: -1px; }
.cmd.green svg { width: 18px; height: 18px; }
.command label { width: 48px; margin-left: -2px; padding-left: 3px; background: var(--cream); white-space: nowrap; }
.command input {
  width: 171px;
  margin-left: -1px;
  padding: 0 6px;
  border: 3px solid;
  border-color: #8c8c70 #c8c8a0 #c8c8a0 #8c8c70;
  outline: 1px solid var(--green);
  outline-offset: -1px;
  background: repeating-linear-gradient(#000 0 1px, var(--cream) 1px 2px) 4px 2px / 1px 15px no-repeat var(--cream);
}
.message { flex: 1; margin: 0; padding-left: 3px; background: var(--cream); }
.units { width: 77px; padding: 2px; background: var(--green); }
.units button { width: 71px; height: 27px; margin-left: 4px; padding: 0 6px; display: flex; align-items: center; justify-content: space-between; background: var(--green); border: 2px solid; border-color: var(--green-light) var(--green-dark) var(--green-dark) var(--green-light); }
.units span { width: 12px; height: 6px; border: 2px solid; border-color: var(--green-light) var(--green-dark) var(--green-dark) var(--green-light); }
.status { background: var(--cream); height: 47px; border-bottom: 3px solid #d4d0c8; }
.status output { display: block; height: 32px; background: #b3ffff; border: 3px solid; border-color: #6e9292 #d8ffff #5f8a8a #6e9292; outline: 1px solid #000; outline-offset: -4px; text-align: center; line-height: 26px; }
```
